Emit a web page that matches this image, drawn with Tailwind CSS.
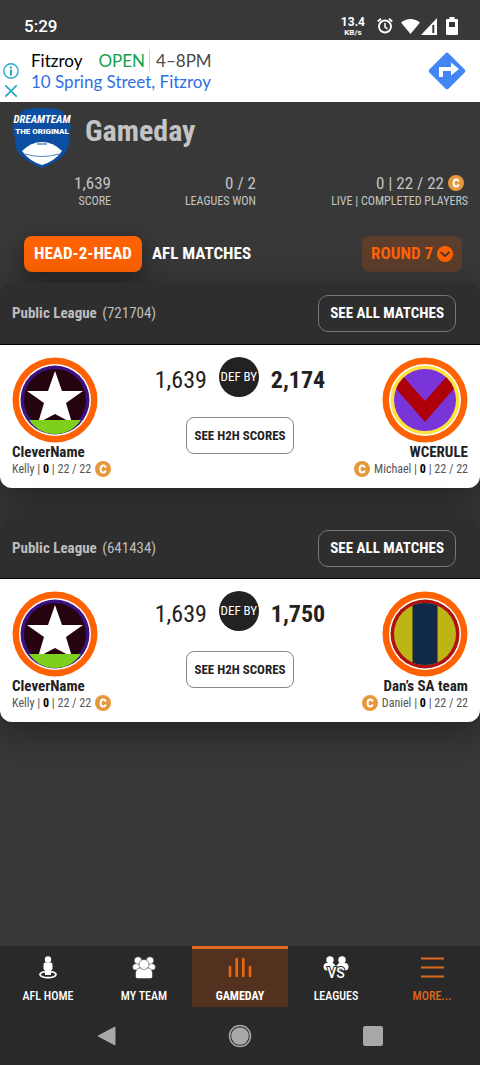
<!DOCTYPE html>
<html lang="en">
<head>
  <meta charset="UTF-8" />
  <meta name="viewport" content="width=device-width, initial-scale=1.0" />
  <title>Gameday</title>
  <script src="https://cdn.jsdelivr.net/npm/@tailwindcss/browser@4"></script>
</head>
<body class="min-h-screen flex flex-col bg-[#383838] text-white font-['Roboto_Condensed','Liberation_Sans_Narrow',Roboto,sans-serif]">

  <!-- Shared icons -->
  <svg class="absolute w-0 h-0">
    <symbol id="star-badge" viewBox="0 0 86 86">
      <circle cx="43" cy="43" r="42.500" fill="#ff6203" />
      <circle cx="43" cy="43" r="36" fill="#fff" />
      <circle cx="43" cy="43" r="34.500" fill="#3c1283" />
      <circle cx="43" cy="43" r="31" fill="#250410" />
      <path d="M43 14l7 20 21 0-17 12 6 20-17-9-17 9 6-20-17-12 21 0z" fill="#fff" />
      <path d="M17 63h52Q59 77 43 77T17 63z" fill="#7fd01c" />
    </symbol>
    <symbol id="captain" viewBox="0 0 16 16">
      <circle cx="8" cy="8" r="8" fill="#e5993a" />
      <path d="M10.600 6.600C10.400 5.200 9.500 4.500 8.200 4.500 6.500 4.500 5.600 5.700 5.600 8s.9 3.500 2.600 3.500c1.300 0 2.200-.7 2.400-2.100" fill="none" stroke="#fff" stroke-width="2" />
    </symbol>
  </svg>

  <!-- Status bar -->
  <div class="h-10 flex items-center justify-between pl-6 pr-[22px] pt-3 font-[Roboto,sans-serif]">
    <span class="text-[17px] leading-6 font-medium">5:29</span>
    <div class="flex items-center">
      <div class="text-center font-bold mr-3">
        <div class="text-[12px] leading-3">13.4</div>
        <div class="text-[8px] leading-[9px]">KB/s</div>
      </div>
      <svg class="w-4 h-[18px] mr-2" viewBox="0 0 16 18" fill="none" stroke="#fff">
        <circle cx="8" cy="9.500" r="6" stroke-width="1.800" />
        <path d="M8 6v4l2.500 1.800" stroke-width="1.500" />
        <path d="M.8 4.500L4 1.800M15.200 4.500L12 1.800" stroke-width="1.800" />
      </svg>
      <svg class="w-[19px] h-4" viewBox="0 0 19 16" fill="#fff"><path d="M0 4.500C5.500-.3 13.500-.3 19 4.500L9.500 16z" /></svg>
      <svg class="w-[18px] h-[17px] mr-2" viewBox="0 0 18 17"><path d="M1 17L17 0v17z" fill="#fff" /><path d="M13.300 7v8" stroke="#383838" stroke-width="2" /></svg>
      <svg class="w-3 h-[18px]" viewBox="0 0 12 18" fill="#fff"><path fill-rule="evenodd" d="M3.500 0h5v2H11a1 1 0 0 1 1 1v14a1 1 0 0 1-1 1H1a1 1 0 0 1-1-1V3a1 1 0 0 1 1-1h2.500zM3 5v5h6V5z" /></svg>
    </div>
  </div>

  <!-- Ad -->
  <div class="h-[62px] flex items-center bg-white pl-[3px] pr-[13px] font-[Lato,sans-serif]">
    <div class="w-7 pt-5 flex flex-col gap-1">
      <svg class="w-4 h-4" viewBox="0 0 14 14" fill="none" stroke="#29a9c9"><circle cx="7" cy="7" r="6.300" stroke-width="1.200" /><path d="M7 6v5M7 3v1.800" stroke-width="1.800" /></svg>
      <svg class="w-4 h-4" viewBox="0 0 14 14" stroke="#29a9c9" stroke-width="1.500"><path d="M2 2l10 10M12 2L2 12" /></svg>
    </div>
    <div class="flex-1 text-[17px] leading-[21px]">
      <div class="flex items-center text-[#4a4a4a]">
        <span class="text-black mr-4">Fitzroy</span>
        <span class="text-[#0fa34a] mr-1">OPEN</span>
        <span class="border-l border-[#d5d5d5] pl-[6px]">4–8PM</span>
      </div>
      <a href="#" class="text-[#2f6fdf]">10 Spring Street, Fitzroy</a>
    </div>
    <a href="#" aria-label="Directions">
      <svg class="w-10 h-10" viewBox="0 0 40 40"><rect x="6.500" y="6.500" width="27" height="27" rx="2" transform="rotate(45 20 20)" fill="#4285f4" /><path d="M14 26v-8h11" fill="none" stroke="#fff" stroke-width="4" /><path d="M24 11.500l8 6.500-8 6.500z" fill="#fff" /></svg>
    </a>
  </div>

  <!-- Header -->
  <header class="text-[#c4c4c4]">
    <div class="flex items-center h-[68px] pt-1 pl-[11px] gap-3">
      <svg class="w-[62px] h-[60px]" viewBox="0 0 62 60">
        <path d="M15 1Q31-1 47 1q5 1 7 8l1 6 5 2-2 14q2 18-27 29Q2 49 4 31L1 17l6-2 1-6q2-7 7-8z" fill="#0c4ea2" />
        <text x="31" y="15" text-anchor="middle" font-size="11" font-weight="700" font-style="italic" fill="#fff">DREAMTEAM</text>
        <text x="31" y="26" text-anchor="middle" font-family="Roboto" font-size="8" font-weight="900" fill="#fff">THE ORIGINAL</text>
        <path d="M11 43Q20 34 31 34t20 9q-7 10-20 14Q18 53 11 43z" fill="#fff" />
        <path d="M14 46q17 5 34 0" fill="none" stroke="#0c4ea2" stroke-width=".7" />
        <path d="M26 36h10" stroke="#0c4ea2" />
      </svg>
      <h1 class="text-[30px] leading-9 font-bold pb-[14px]">Gameday</h1>
    </div>
    <div class="grid grid-cols-[111fr_145fr_212fr] pr-3 pt-1 text-right text-[17px] leading-[18px]">
      <div>
        <div>1,639</div>
        <div class="text-[12px]">SCORE</div>
      </div>
      <div>
        <div>0 / 2</div>
        <div class="text-[12px]">LEAGUES WON</div>
      </div>
      <div>
        <div class="flex items-center justify-end gap-1 pr-1">0 | 22 / 22 <svg class="w-4 h-4"><use href="#captain" /></svg></div>
        <div class="text-[12px]">LIVE | COMPLETED PLAYERS</div>
      </div>
    </div>
    <div class="flex items-center pl-6 pr-[18px] pt-[26px] pb-[11px] text-[17px] font-bold text-white">
      <button class="h-9 px-[10px] rounded-lg bg-[#ff6203] shadow-[0_8px_24px_rgba(0,0,0,0.4)]">HEAD-2-HEAD</button>
      <button class="h-9 px-[10px]">AFL MATCHES</button>
      <button class="ml-auto h-9 px-[9px] rounded-lg bg-[#5c3e2b] text-[#ff6203] flex items-center gap-1">ROUND 7
        <svg class="w-4 h-4" viewBox="0 0 16 16"><circle cx="8" cy="8" r="8" fill="#ff6203" /><path d="M3.500 6L8 10l4.500-4" fill="none" stroke="#4a3528" stroke-width="2" /></svg>
      </button>
    </div>
  </header>

  <main class="flex-1 flex flex-col gap-[30px]">
    <section class="rounded-xl overflow-hidden shadow-[0_10px_40px_rgba(0,0,0,0.4)]">
      <div class="h-[62px] flex items-center justify-between bg-[#2e2e2e] border-b border-black pl-3 pr-6 text-[15px] text-[#bdbdbd]">
        <h2><b class="mr-[2px]">Public League</b> (721704)</h2>
        <button class="h-[37px] px-[11px] rounded-[10px] border border-[#777] font-bold text-white">SEE ALL MATCHES</button>
      </div>
      <div class="h-[143px] bg-white text-[#222] px-3 pt-3 flex justify-between">
        <div class="w-[110px]">
          <svg class="w-[86px] h-[86px]"><use href="#star-badge" /></svg>
          <div class="text-[15px] leading-[18px] font-bold">CleverName</div>
          <div class="flex items-center gap-1 text-[12px] leading-4 text-[#555] whitespace-nowrap"><span>Kelly | <b class="text-black">0</b> | 22 / 22</span> <svg class="w-4 h-4"><use href="#captain" /></svg></div>
        </div>
        <div class="flex flex-col items-center gap-[14px]">
          <div class="flex gap-3 text-[24px] leading-[46px]">
            <span>1,639</span>
            <span class="w-10 h-10 rounded-full bg-[#222] text-white text-[13px] leading-10 text-center">DEF BY</span>
            <b>2,174</b>
          </div>
          <button class="h-[37px] px-[7px] rounded-lg border border-[#888] text-[13px] font-bold">SEE H2H SCORES</button>
        </div>
        <div class="w-[110px] flex flex-col items-end">
          <svg class="w-[86px] h-[86px]" viewBox="0 0 86 86">
            <clipPath id="vee-clip"><circle cx="43" cy="43" r="31" /></clipPath>
            <circle cx="43" cy="43" r="42.500" fill="#ff6203" />
            <circle cx="43" cy="43" r="36" fill="#fff" />
            <circle cx="43" cy="43" r="34.500" fill="#ffe13b" />
            <g clip-path="url(#vee-clip)">
              <rect width="86" height="86" fill="#7a35d8" />
              <path d="M20 18L10 27l33 38 33-38-10-9-23 26z" fill="#ad0008" />
            </g>
          </svg>
          <div class="text-[15px] leading-[18px] font-bold">WCERULE</div>
          <div class="flex items-center gap-1 text-[12px] leading-4 text-[#555] whitespace-nowrap"><svg class="w-4 h-4"><use href="#captain" /></svg> <span>Michael | <b class="text-black">0</b> | 22 / 22</span></div>
        </div>
      </div>
    </section>

    <section class="rounded-xl overflow-hidden shadow-[0_10px_40px_rgba(0,0,0,0.4)]">
      <div class="h-[61px] flex items-center justify-between bg-[#2e2e2e] border-b border-black pl-3 pr-6 text-[15px] text-[#bdbdbd]">
        <h2><b class="mr-[2px]">Public League</b> (641434)</h2>
        <button class="h-[37px] px-[11px] rounded-[10px] border border-[#777] font-bold text-white">SEE ALL MATCHES</button>
      </div>
      <div class="h-[143px] bg-white text-[#222] px-3 pt-3 flex justify-between">
        <div class="w-[110px]">
          <svg class="w-[86px] h-[86px]"><use href="#star-badge" /></svg>
          <div class="text-[15px] leading-[18px] font-bold">CleverName</div>
          <div class="flex items-center gap-1 text-[12px] leading-4 text-[#555] whitespace-nowrap"><span>Kelly | <b class="text-black">0</b> | 22 / 22</span> <svg class="w-4 h-4"><use href="#captain" /></svg></div>
        </div>
        <div class="flex flex-col items-center gap-[14px]">
          <div class="flex gap-3 text-[24px] leading-[46px]">
            <span>1,639</span>
            <span class="w-10 h-10 rounded-full bg-[#222] text-white text-[13px] leading-10 text-center">DEF BY</span>
            <b>1,750</b>
          </div>
          <button class="h-[37px] px-[7px] rounded-lg border border-[#888] text-[13px] font-bold">SEE H2H SCORES</button>
        </div>
        <div class="w-[110px] flex flex-col items-end">
          <svg class="w-[86px] h-[86px]" viewBox="0 0 86 86">
            <clipPath id="stripe-clip"><circle cx="43" cy="43" r="31" /></clipPath>
            <circle cx="43" cy="43" r="42.500" fill="#ff6203" />
            <circle cx="43" cy="43" r="36" fill="#fff" />
            <circle cx="43" cy="43" r="34.500" fill="#b01010" />
            <g clip-path="url(#stripe-clip)">
              <rect width="86" height="86" fill="#bdb416" />
              <rect x="31" width="24" height="86" fill="#10294b" />
              <path d="M31 0v86M55 0v86" stroke="#222" />
            </g>
          </svg>
          <div class="text-[15px] leading-[18px] font-bold">Dan’s SA team</div>
          <div class="flex items-center gap-1 text-[12px] leading-4 text-[#555] whitespace-nowrap"><svg class="w-4 h-4"><use href="#captain" /></svg> <span>Daniel | <b class="text-black">0</b> | 22 / 22</span></div>
        </div>
      </div>
    </section>
  </main>

  <!-- Tab bar -->
  <nav class="grid grid-cols-5 h-[61px] bg-[#292929] text-[12px] leading-4 font-medium text-center">
    <a href="#" class="flex flex-col items-center gap-2 pt-[10px]">
      <svg class="w-6 h-6" viewBox="0 0 24 24" fill="#fff"><ellipse cx="12" cy="18.500" rx="8" ry="3.200" fill="none" stroke="#fff" stroke-width="1.800" /><circle cx="12" cy="3.500" r="3.200" /><path d="M9 6.500h6q1.500 0 1.500 2V13l-1.500 1.500v4.500H9v-4.500L7.500 13V8.500q0-2 1.500-2z" /></svg>
      AFL HOME
    </a>
    <a href="#" class="flex flex-col items-center gap-2 pt-[10px]">
      <svg class="w-6 h-6" viewBox="0 0 24 24" fill="#fff" stroke="#292929" stroke-width=".5"><path d="M.5 11Q.5 8 4 7.500h4V14H3Q.5 14 .5 11zM23.500 11q0-3-3.500-3.500h-4V14h5q2.500 0 2.500-3z" /><circle cx="6" cy="4.500" r="3.700" /><circle cx="18" cy="4.500" r="3.700" /><path d="M3.500 18q0-5.500 4.500-6h8q4.500.5 4.500 6v2.500q0 2-2 2h-13q-2 0-2-2z" /><circle cx="12" cy="8.500" r="5" /></svg>
      MY TEAM
    </a>
    <a href="#" class="flex flex-col items-center gap-2 pt-[7px] border-t-3 border-[#df681c] bg-[#52311f] font-bold">
      <svg class="w-6 h-6" viewBox="0 0 24 24" stroke="#ed650f" stroke-width="2.600" stroke-linecap="round"><path d="M2 11v9M8.700 3v17M15.300 3v17M22 11v9" /></svg>
      GAMEDAY
    </a>
    <a href="#" class="flex flex-col items-center gap-2 pt-[10px]">
      <svg class="w-[26px] h-6" viewBox="0 0 26 24" fill="#fff"><circle cx="7" cy="4" r="3.700" /><circle cx="19" cy="4" r="3.700" /><path d="M.5 11Q.5 7 4 7h6l3 3 3-3h6q3.500 0 3.500 4 0 3-3 3.500h-19Q.5 14 .5 11z" /><text x="13" y="22" text-anchor="middle" font-family="Roboto" font-size="14" font-weight="500" stroke="#292929" stroke-width="2" paint-order="stroke">VS</text></svg>
      LEAGUES
    </a>
    <a href="#" class="flex flex-col items-center gap-2 pt-[10px] text-[#df681c]">
      <svg class="w-6 h-6" viewBox="0 0 24 24" stroke="#df681c" stroke-width="2"><path d="M1 2.500h23M1 11.500h23M1 20.500h23" /></svg>
      MORE...
    </a>
  </nav>

  <!-- System buttons -->
  <div class="h-[58px] bg-[#292929] grid grid-cols-3 items-center justify-items-center px-10">
    <button aria-label="Back"><svg class="w-5 h-5" viewBox="0 0 20 20"><path d="M18 1v18L1 10z" fill="#a8a8a8" stroke="#a8a8a8" stroke-linejoin="round" /></svg></button>
    <button aria-label="Home"><svg class="w-6 h-6" viewBox="0 0 24 24"><circle cx="12" cy="12" r="10.500" fill="none" stroke="#a8a8a8" stroke-width="1.500" /><circle cx="12" cy="12" r="8.800" fill="#a8a8a8" /></svg></button>
    <button aria-label="Recent apps"><svg class="w-5 h-5" viewBox="0 0 20 20"><rect width="20" height="20" rx="2" fill="#a8a8a8" /></svg></button>
  </div>

</body>
</html>
